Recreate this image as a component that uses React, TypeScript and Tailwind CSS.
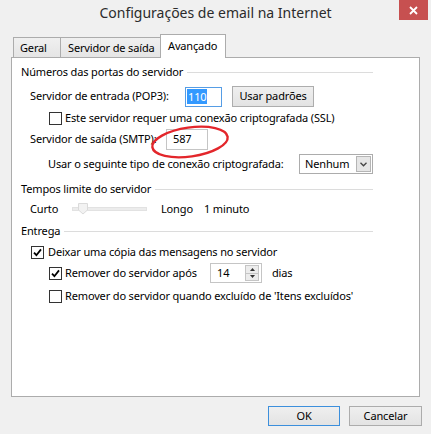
import React from 'react'

const Check = ({ checked }: { checked?: boolean }) => (
  <span className="w-[13px] h-[13px] border border-[#333333] bg-white flex items-center justify-center shrink-0">
    {checked && (
      <svg width="9" height="9" viewBox="0 0 9 9">
        <path d="M1 4.6 L3.4 7.2 L8 1.4" stroke="#000" strokeWidth="1.8" fill="none" />
      </svg>
    )}
  </span>
)

const GroupTitle = ({ title, className = '' }: { title: string; className?: string }) => (
  <div className={`h-[20px] flex items-center gap-[4px] ${className}`}>
    <span>{title}</span>
    <span className="flex-1 h-px bg-[#dcdcdc]" />
  </div>
)

const Button = ({ label, className = '' }: { label: string; className?: string }) => (
  <div
    className={`flex items-center justify-center border bg-gradient-to-b from-[#efefef] to-[#e3e3e3] ${className}`}
  >
    {label}
  </div>
)

export default function App() {
  return (
    <div className="w-[431px] h-[434px] bg-[#f0f0f0] text-black text-[11px] tracking-[-0.15px] font-['Noto_Sans',sans-serif] flex flex-col overflow-hidden">
      {/* title bar */}
      <div className="h-[28px] grid grid-cols-[1fr_auto_1fr]">
        <div />
        <div className="text-[14px] tracking-normal leading-[26px] text-[#2b2b2b]">Configurações de email na Internet</div>
        <div className="flex justify-end pr-[3px]">
          <div className="w-[29px] h-[20px] bg-[#c75050] flex items-center justify-center">
            <svg width="9" height="9" viewBox="0 0 9 9">
              <path d="M1 1 L8 8 M8 1 L1 8" stroke="#fff" strokeWidth="1.8" />
            </svg>
          </div>
        </div>
      </div>

      {/* tabs */}
      <div className="mt-[6px] h-[23px] px-[11px] flex items-end">
        <div className="ml-[2px] flex items-end">
          <div className="w-[48px] h-[20px] border-x border-t border-[#acacac] bg-gradient-to-b from-[#f0f0f0] to-[#e5e5e5] pl-[6px] leading-[19px]">
            Geral
          </div>
          <div className="w-[101px] h-[20px] -ml-px border-x border-t border-[#acacac] bg-gradient-to-b from-[#f0f0f0] to-[#e5e5e5] pl-[7px] leading-[19px]">
            Servidor de saída
          </div>
          <div className="relative z-10 w-[66px] h-[24px] -mb-px -ml-px border-x border-t border-[#acacac] bg-white pl-[7px] leading-[22px]">
            Avançado
          </div>
        </div>
      </div>

      {/* panel */}
      <div className="mx-[11px] h-[340px] border border-[#acacac] bg-white">
        <div className="relative pt-[4px] pl-[9px] pr-[46px] flex flex-col">
          <GroupTitle title="Números das portas do servidor" />

          <div className="mt-[4px] h-[21px] flex items-center">
            <span className="ml-[9px] w-[155px]">Servidor de entrada (POP3):</span>
            <div className="w-[37px] h-[20px] border border-[#569de5] flex items-center pl-[1px]">
              <span className="bg-[#3399ff] text-white leading-[15px] px-[1px]">110</span>
            </div>
            <Button label="Usar padrões" className="ml-[10px] w-[82px] h-[21px] border-[#adadad]" />
          </div>

          <div className="h-[22px] flex items-center gap-[3px] ml-[28px]">
            <Check />
            <span>Este servidor requer uma conexão criptografada (SSL)</span>
          </div>

          <div className="h-[21px] flex items-center">
            <span className="ml-[9px] w-[136px]">Servidor de saída (SMTP):</span>
            <div className="w-[42px] h-[21px] border border-[#c5c5c5] flex items-center pl-[6px]">587</div>
          </div>

          <div className="mt-[4px] h-[20px] flex items-center">
            <span className="ml-[27px]">Usar o seguinte tipo de conexão criptografada:</span>
            <div className="ml-auto w-[74px] h-[20px] border border-[#acacac] flex items-center pl-[5px] pr-[1px]">
              <span className="flex-1">Nenhum</span>
              <div className="w-[15px] h-[16px] border border-[#b5b5b5] bg-[#e6e6e6] flex items-center justify-center">
                <svg width="7" height="5" viewBox="0 0 7 5">
                  <path d="M0.5 0.8 L3.5 3.8 L6.5 0.8" stroke="#444" strokeWidth="1.3" fill="none" />
                </svg>
              </div>
            </div>
          </div>

          <GroupTitle title="Tempos limite do servidor" className="mt-[5px]" />

          <div className="h-[20px] flex items-center">
            <span className="ml-[9px] w-[42px]">Curto</span>
            <div className="relative w-[75px] h-[4px] border border-[#e2e2e2] bg-[#ececec]">
              <svg className="absolute left-[5px] -top-[5px]" width="10" height="12" viewBox="0 0 10 12">
                <path d="M0.5 0.5 H9.5 V7 L5 11 L0.5 7 Z" fill="#f2f2f2" stroke="#dadada" />
              </svg>
            </div>
            <span className="ml-[14px] w-[43px]">Longo</span>
            <span>1 minuto</span>
          </div>

          <GroupTitle title="Entrega" className="mt-[2px]" />

          <div className="mt-[1px] h-[20px] flex items-center gap-[4px] ml-[10px]">
            <Check checked />
            <span>Deixar uma cópia das mensagens no servidor</span>
          </div>

          <div className="mt-[1px] h-[20px] flex items-center">
            <div className="ml-[28px] w-[161px] flex items-center gap-[3px]">
              <Check checked />
              <span>Remover do servidor após</span>
            </div>
            <div className="w-[52px] h-[20px] border border-[#c5c5c5] flex items-center pl-[6px] pr-[2px]">
              <span className="flex-1">14</span>
              <div className="w-[14px] h-[16px] border border-[#c5c5c5] bg-[#ececec] flex flex-col">
                <div className="flex-1 flex items-center justify-center border-b border-[#c5c5c5]">
                  <svg width="5" height="3" viewBox="0 0 5 3"><path d="M0 3 L2.5 0 L5 3 Z" fill="#333" /></svg>
                </div>
                <div className="flex-1 flex items-center justify-center">
                  <svg width="5" height="3" viewBox="0 0 5 3"><path d="M0 0 L2.5 3 L5 0 Z" fill="#333" /></svg>
                </div>
              </div>
            </div>
            <span className="ml-[10px]">dias</span>
          </div>

          <div className="mt-[3px] h-[20px] flex items-center gap-[3px] ml-[28px]">
            <Check />
            <span>Remover do servidor quando excluído de 'Itens excluídos'</span>
          </div>

          {/* red annotation */}
          <svg className="absolute left-[136px] top-[66px]" width="84" height="36" viewBox="0 0 84 36">
            <ellipse cx="42" cy="18" rx="38" ry="14.5" transform="rotate(-8 42 18)" fill="none" stroke="#e3262b" strokeWidth="2.4" />
          </svg>
        </div>
      </div>

      {/* footer */}
      <div className="mt-[9px] pr-[9px] flex justify-end gap-[9px]">
        <Button label="OK" className="w-[72px] h-[20px] border-[#3c8fdc]" />
        <Button label="Cancelar" className="w-[73px] h-[20px] border-[#acacac]" />
      </div>
    </div>
  )
}
